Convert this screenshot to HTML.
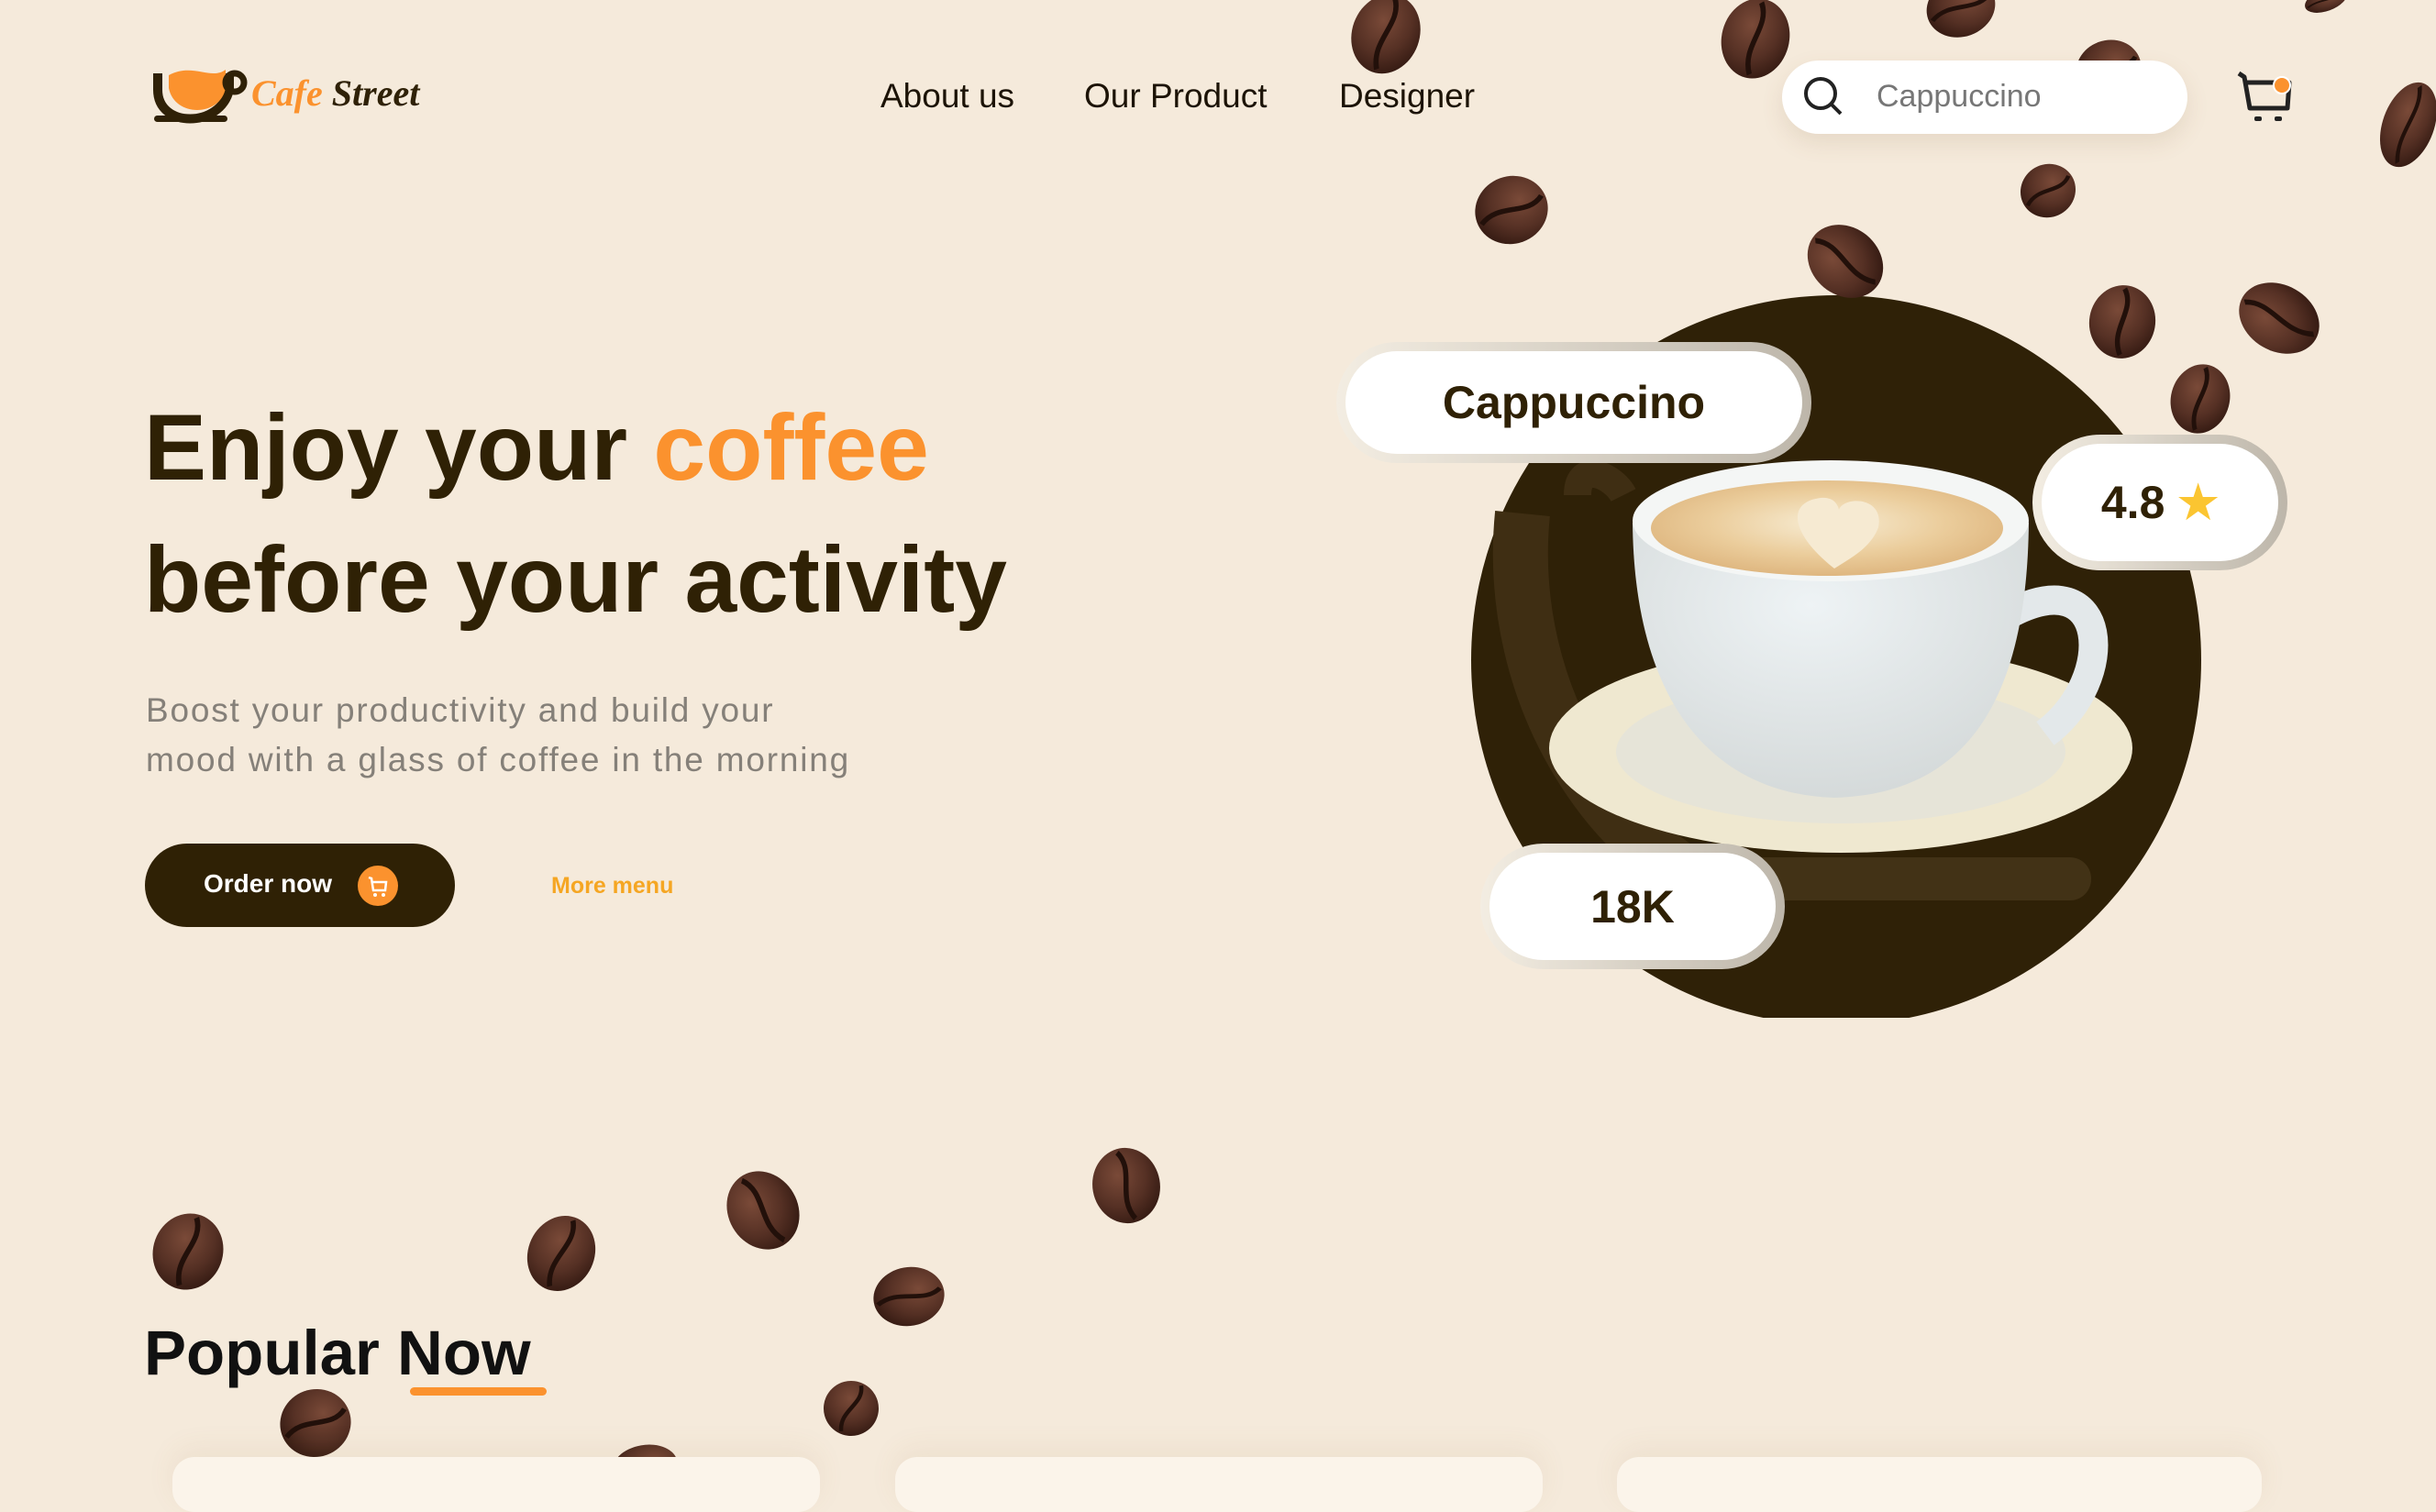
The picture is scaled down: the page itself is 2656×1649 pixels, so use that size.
<!DOCTYPE html>
<html><head><meta charset="utf-8"><style>
*{margin:0;padding:0;box-sizing:border-box}
html,body{width:2656px;height:1602px;overflow:hidden;background:#f5eadb;font-family:"Liberation Sans",sans-serif}
.abs{position:absolute}
.nav{font-size:37px;color:#1c1306;top:84px}
.pill{position:absolute;border-radius:80px;background:linear-gradient(90deg,#f3ede2,#bdb6aa);padding:10px}
.pill div{background:#fff;border-radius:70px;width:100%;height:100%;display:flex;align-items:center;justify-content:center;color:#2f2105;font-weight:bold}
</style></head><body>
<svg class="abs" style="left:0;top:0" width="2656" height="1602" viewBox="0 0 2656 1602">
<defs>
<radialGradient id="bg" cx="40%" cy="35%" r="70%"><stop offset="0" stop-color="#7a4a38"/><stop offset="0.6" stop-color="#553024"/><stop offset="1" stop-color="#341a12"/></radialGradient>
<g id="bean"><ellipse rx="40" ry="40" fill="url(#bg)"/><path d="M-4,-36 C14,-14 -14,10 4,36" stroke="#22100a" stroke-width="6" fill="none"/></g>
<radialGradient id="cup" cx="45%" cy="30%" r="75%"><stop offset="0" stop-color="#eef3f5"/><stop offset="1" stop-color="#d3d8d8"/></radialGradient>
<radialGradient id="cof" cx="50%" cy="45%" r="60%"><stop offset="0" stop-color="#f7ecd3"/><stop offset="0.55" stop-color="#ebcd9c"/><stop offset="1" stop-color="#dcb27a"/></radialGradient>
<clipPath id="cc"><rect x="1500" y="300" width="1000" height="810"/></clipPath>
</defs>
<g clip-path="url(#cc)">
<circle cx="2002" cy="720" r="398" fill="#2f2107"/>
<path d="M1660,560 C1640,760 1760,940 1900,980" stroke="#3f2e13" stroke-width="60" fill="none"/>
<path d="M1720,540 C1720,500 1760,520 1770,540" stroke="#3f2e13" stroke-width="30" fill="none"/>
<rect x="1900" y="935" width="380" height="47" rx="23" fill="#423216"/>
</g>
<ellipse cx="2007" cy="816" rx="318" ry="114" fill="#efe8d0"/>
<ellipse cx="2007" cy="820" rx="245" ry="78" fill="#e6e4d8"/>
<path d="M2190,670 C2300,610 2310,740 2230,800" stroke="#e3e8ea" stroke-width="32" fill="none"/>
<path d="M1780,570 C1782,770 1870,866 2000,870 C2140,866 2210,770 2212,570 Z" fill="url(#cup)"/>
<ellipse cx="1996" cy="568" rx="216" ry="66" fill="#f4f6f5"/>
<ellipse cx="1992" cy="576" rx="192" ry="52" fill="url(#cof)"/>
<path d="M2000,620 C1955,585 1945,548 1985,543 C2003,541 2005,556 2005,556 C2010,541 2055,541 2048,575 C2040,598 2015,610 2000,620Z" fill="#f6ead2"/>
<use href="#bean" transform="translate(1511,37) rotate(20) scale(0.92,1.1)"/>
<use href="#bean" transform="translate(1914,42) rotate(15) scale(0.92,1.1)"/>
<use href="#bean" transform="translate(2138,8) rotate(70) scale(0.8,0.95)"/>
<use href="#bean" transform="translate(2626,136) rotate(20) scale(0.7,1.2)"/>
<use href="#bean" transform="translate(1648,229) rotate(70) scale(0.92,1)"/>
<use href="#bean" transform="translate(2233,208) rotate(60) scale(0.72,0.76)"/>
<use href="#bean" transform="translate(2012,285) rotate(-50) scale(0.92,1.1)"/>
<use href="#bean" transform="translate(2314,351) rotate(10) scale(0.9,1)"/>
<use href="#bean" transform="translate(2485,347) rotate(-60) scale(0.9,1.15)"/>
<use href="#bean" transform="translate(2399,435) rotate(15) scale(0.8,0.95)"/>
<use href="#bean" transform="translate(2299,76) rotate(70) scale(0.8,0.9)"/>
<use href="#bean" transform="translate(2536,0) rotate(70) scale(0.3,0.6)"/>
<use href="#bean" transform="translate(205,1365) rotate(20) scale(0.95,1.05)"/>
<use href="#bean" transform="translate(612,1367) rotate(25) scale(0.9,1.05)"/>
<use href="#bean" transform="translate(832,1320) rotate(-30) scale(0.95,1.1)"/>
<use href="#bean" transform="translate(1228,1293) rotate(-10) scale(0.92,1.03)"/>
<use href="#bean" transform="translate(991,1414) rotate(80) scale(0.8,0.97)"/>
<use href="#bean" transform="translate(344,1552) rotate(70) scale(0.92,0.97)"/>
<use href="#bean" transform="translate(928,1536) rotate(30) scale(0.75,0.75)"/>
<use href="#bean" transform="translate(703,1600) rotate(80) scale(0.6,0.9)"/>
<path d="M172,80 L172,98 C172,140 240,140 250,98 L250,80" stroke="#2f2107" stroke-width="10" fill="none"/>
<path d="M184,82 C210,68 230,88 246,76 L246,96 C240,128 190,128 184,96 Z" fill="#fb922e"/>
<circle cx="256" cy="90" r="10" stroke="#2f2107" stroke-width="7" fill="none"/>
<rect x="168" y="126" width="80" height="7" rx="3.5" fill="#2f2107"/>
<path d="M2441,80 L2447,84 L2453,118 L2494,118 L2496,90 L2449,90" stroke="#222" stroke-width="5" fill="none" stroke-linejoin="round"/>
<rect x="2458" y="127" width="8" height="5" rx="2" fill="#222"/><rect x="2480" y="127" width="8" height="5" rx="2" fill="#222"/>
<circle cx="2488" cy="93" r="9" fill="#fb922e" stroke="#fff" stroke-width="2"/>
</svg>
<div class="abs" style="left:274px;top:78px;font-size:40px;font-style:italic;font-family:'Liberation Serif',serif;font-weight:bold"><span style="color:#fb922e">Cafe</span> <span style="color:#2f2107">Street</span></div>
<div class="abs nav" style="left:960px">About us</div>
<div class="abs nav" style="left:1182px">Our Product</div>
<div class="abs nav" style="left:1460px">Designer</div>
<div class="abs" style="left:1943px;top:66px;width:442px;height:80px;background:#fff;border-radius:40px;box-shadow:0 10px 25px rgba(120,90,50,.12)"></div>
<svg class="abs" style="left:1965px;top:82px" width="44" height="44"><circle cx="20" cy="20" r="16" stroke="#222" stroke-width="4" fill="none"/><line x1="32" y1="32" x2="42" y2="42" stroke="#222" stroke-width="4"/></svg>
<div class="abs" style="left:2046px;top:86px;font-size:34px;color:#777">Cappuccino</div>
<div class="abs" style="left:157px;top:416px;font-size:102px;font-weight:bold;color:#2f2105;line-height:144px">Enjoy your <span style="color:#fb922e">coffee</span><br>before your activity</div>
<div class="abs" style="left:159px;top:748px;font-size:37px;color:#858079;line-height:54px;letter-spacing:1.8px">Boost your productivity and build your<br>mood with a glass of coffee in the morning</div>
<div class="abs" style="left:158px;top:920px;width:338px;height:91px;background:#2f2105;border-radius:46px"></div>
<div class="abs" style="left:222px;top:948px;font-size:28px;font-weight:bold;color:#fff">Order now</div>
<svg class="abs" style="left:390px;top:944px" width="44" height="44"><circle cx="22" cy="22" r="22" fill="#fb922e"/><path d="M12,13 L15,14 L17,27 L30,27 L31,18 L16,18" stroke="#fff" stroke-width="2.5" fill="none"/><circle cx="19" cy="32" r="2" fill="#fff"/><circle cx="28" cy="32" r="2" fill="#fff"/></svg>
<div class="abs" style="left:601px;top:952px;font-size:25px;font-weight:bold;color:#f5a623">More menu</div>
<div class="pill" style="left:1457px;top:373px;width:518px;height:132px"><div style="font-size:50px">Cappuccino</div></div>
<div class="pill" style="left:2216px;top:474px;width:278px;height:148px"><div style="font-size:50px">4.8&nbsp;<span style="color:#fbc531;font-size:50px">★</span></div></div>
<div class="pill" style="left:1614px;top:920px;width:332px;height:137px"><div style="font-size:50px">18K</div></div>
<div class="abs" style="left:157px;top:1436px;font-size:69px;font-weight:bold;color:#111">Popular Now</div>
<div class="abs" style="left:447px;top:1513px;width:149px;height:9px;background:#fb922e;border-radius:5px"></div>
<div class="abs" style="left:188px;top:1589px;width:706px;height:60px;background:#fbf4ea;border-radius:24px;box-shadow:0 -10px 30px rgba(150,110,60,.08)"></div>
<div class="abs" style="left:976px;top:1589px;width:706px;height:60px;background:#fbf4ea;border-radius:24px;box-shadow:0 -10px 30px rgba(150,110,60,.08)"></div>
<div class="abs" style="left:1763px;top:1589px;width:703px;height:60px;background:#fbf4ea;border-radius:24px;box-shadow:0 -10px 30px rgba(150,110,60,.08)"></div>
</body></html>
